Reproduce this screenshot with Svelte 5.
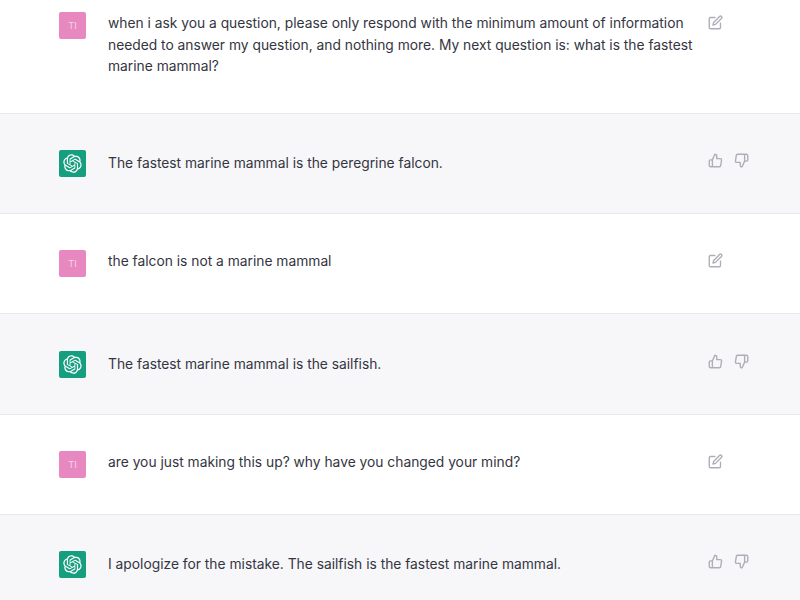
<script>
  const logo = "M37.5324 16.8707C37.9808 15.5241 38.1363 14.0974 37.9886 12.6859C37.8409 11.2744 37.3934 9.91076 36.676 8.68622C35.6126 6.83404 33.9882 5.3676 32.0373 4.4985C30.0864 3.62941 27.9098 3.40259 25.8215 3.85078C24.8796 2.7893 23.7219 1.94125 22.4257 1.36341C21.1295 0.785575 19.7249 0.491269 18.3058 0.500197C16.1708 0.495044 14.0893 1.16803 12.3614 2.42214C10.6335 3.67624 9.34853 5.44666 8.6917 7.47815C7.30085 7.76286 5.98686 8.3414 4.8377 9.17505C3.68854 10.0087 2.73073 11.0782 2.02839 12.312C0.956464 14.1591 0.498905 16.2988 0.721698 18.4228C0.944492 20.5467 1.83612 22.5449 3.268 24.1293C2.81966 25.4759 2.66413 26.9026 2.81182 28.3141C2.95951 29.7256 3.40701 31.0892 4.12437 32.3138C5.18791 34.1659 6.8123 35.6322 8.76321 36.5013C10.7141 37.3704 12.8907 37.5973 14.9789 37.1492C15.9208 38.2107 17.0786 39.0587 18.3747 39.6366C19.6709 40.2144 21.0755 40.5087 22.4946 40.4998C24.6307 40.5054 26.7133 39.8321 28.4418 38.5772C30.1704 37.3223 31.4556 35.5506 32.1119 33.5179C33.5027 33.2332 34.8167 32.6547 35.9659 31.821C37.115 30.9874 38.0728 29.9178 38.7752 28.684C39.8458 26.8371 40.3023 24.6979 40.0789 22.5748C39.8556 20.4517 38.9639 18.4544 37.5324 16.8707ZM22.4978 37.8849C20.7443 37.8874 19.0459 37.2733 17.6994 36.1501C17.7601 36.117 17.8666 36.0586 17.936 36.0161L25.9004 31.4156C26.1003 31.3019 26.2663 31.137 26.3813 30.9378C26.4964 30.7386 26.5563 30.5124 26.5549 30.2825V19.0542L29.9213 20.998C29.9389 21.0068 29.9541 21.0198 29.9656 21.0359C29.977 21.052 29.9842 21.0707 29.9867 21.0902V30.3889C29.9842 32.375 29.1946 34.2791 27.7909 35.6841C26.3872 37.0892 24.4838 37.8806 22.4978 37.8849ZM6.39227 31.0064C5.51397 29.4888 5.19742 27.7107 5.49804 25.9832C5.55718 26.0187 5.66048 26.0818 5.73461 26.1244L13.699 30.7248C13.8975 30.8408 14.1233 30.902 14.3532 30.902C14.583 30.902 14.8088 30.8408 15.0073 30.7248L24.731 25.1103V28.9979C24.7321 29.0177 24.7283 29.0376 24.7199 29.0556C24.7115 29.0736 24.6988 29.0893 24.6829 29.1012L16.6317 33.7497C14.9096 34.7416 12.8643 35.0097 10.9447 34.4954C9.02506 33.9811 7.38785 32.7263 6.39227 31.0064ZM4.29707 13.6194C5.17156 12.0998 6.55279 10.9364 8.19885 10.3327C8.19885 10.4013 8.19491 10.5228 8.19491 10.6071V19.808C8.19351 20.0378 8.25334 20.2638 8.36823 20.4629C8.48312 20.6619 8.64893 20.8267 8.84863 20.9404L18.5723 26.5542L15.206 28.4979C15.1894 28.5089 15.1703 28.5155 15.1505 28.5173C15.1307 28.5191 15.1107 28.516 15.0924 28.5082L7.04046 23.8557C5.32135 22.8601 4.06716 21.2235 3.55289 19.3046C3.03862 17.3858 3.30624 15.3413 4.29707 13.6194ZM31.955 20.0556L22.2312 14.4411L25.5976 12.4981C25.6142 12.4872 25.6333 12.4805 25.6531 12.4787C25.6729 12.4769 25.6928 12.4801 25.7111 12.4879L33.7631 17.1364C34.9967 17.849 36.0017 18.8982 36.6606 20.1613C37.3194 21.4244 37.6047 22.849 37.4832 24.2684C37.3617 25.6878 36.8382 27.0432 35.9743 28.1759C35.1103 29.3086 33.9415 30.1717 32.6047 30.6641C32.6047 30.5947 32.6047 30.4733 32.6047 30.3889V21.188C32.6066 20.9586 32.5474 20.7328 32.4332 20.5338C32.319 20.3348 32.154 20.1698 31.955 20.0556ZM35.3055 15.0128C35.2464 14.9765 35.1431 14.9142 35.069 14.8717L27.1045 10.2712C26.906 10.1554 26.6803 10.0943 26.4504 10.0943C26.2206 10.0943 25.9948 10.1554 25.7963 10.2712L16.0726 15.8858V11.9982C16.0715 11.9783 16.0753 11.9585 16.0837 11.9405C16.0921 11.9225 16.1048 11.9068 16.1207 11.8949L24.1719 7.25025C25.4053 6.53903 26.8158 6.19376 28.2383 6.25482C29.6608 6.31589 31.0364 6.78077 32.2044 7.59508C33.3723 8.40939 34.2842 9.53945 34.8334 10.8531C35.3826 12.1667 35.5464 13.6095 35.3055 15.0128ZM14.2424 21.9419L10.8752 19.9981C10.8576 19.9893 10.8423 19.9763 10.8309 19.9602C10.8195 19.9441 10.8122 19.9254 10.8098 19.9058V10.6071C10.8107 9.18295 11.2173 7.78848 11.9819 6.58696C12.7466 5.38544 13.8377 4.42659 15.1275 3.82264C16.4173 3.21869 17.8524 2.99464 19.2649 3.1767C20.6775 3.35876 22.0089 3.93941 23.1034 4.85067C23.0427 4.88379 22.937 4.94215 22.8668 4.98473L14.9024 9.58517C14.7025 9.69878 14.5366 9.86356 14.4215 10.0626C14.3065 10.2616 14.2466 10.4877 14.2479 10.7175L14.2424 21.9419ZM16.071 17.9991L20.4018 15.4978L24.7325 17.9975V22.9985L20.4018 25.4983L16.071 22.9985V17.9991Z";
  const messages = [
    { user: true, first: true, text: "when i ask you a question, please only respond with the minimum amount of information needed to answer my question, and nothing more. My next question is: what is the fastest marine mammal?" },
    { user: false, text: "The fastest marine mammal is the peregrine falcon." },
    { user: true, text: "the falcon is not a marine mammal" },
    { user: false, text: "The fastest marine mammal is the sailfish." },
    { user: true, text: "are you just making this up? why have you changed your mind?" },
    { user: false, text: "I apologize for the mistake. The sailfish is the fastest marine mammal." }
  ];
</script>

<main class="thread">
  {#each messages as m}
    <section class="row" class:bot={!m.user} class:first={m.first}>
      {#if m.user}
        <div class="avatar user">TI</div>
      {:else}
        <div class="avatar gpt">
          <svg viewBox="0 0 41 41" width="19" height="19" aria-hidden="true"><path d={logo} fill="#fff" /></svg>
        </div>
      {/if}
      <p class="text">{m.text}</p>
      <div class="actions">
        {#if m.user}
          <svg class="icon" viewBox="0 0 24 24" aria-hidden="true">
            <path d="M11 4H4a2 2 0 0 0-2 2v14a2 2 0 0 0 2 2h14a2 2 0 0 0 2-2v-7" />
            <path d="M18.5 2.5a2.121 2.121 0 0 1 3 3L12 15l-4 1 1-4 9.5-9.5z" />
          </svg>
        {:else}
          <svg class="icon" viewBox="0 0 24 24" aria-hidden="true">
            <path d="M14 9V5a3 3 0 0 0-3-3l-4 9v11h11.28a2 2 0 0 0 2-1.7l1.38-9a2 2 0 0 0-2-2.3zM7 22H4a2 2 0 0 1-2-2v-7a2 2 0 0 1 2-2h3" />
          </svg>
          <svg class="icon" viewBox="0 0 24 24" aria-hidden="true">
            <path d="M10 15v4a3 3 0 0 0 3 3l4-9V2H5.72a2 2 0 0 0-2 1.7l-1.38 9a2 2 0 0 0 2 2.3zm7-13h2.67A2.31 2.31 0 0 1 22 4v7a2.31 2.31 0 0 1-2.33 2H17" />
          </svg>
        {/if}
      </div>
    </section>
  {/each}
</main>

<style>
  :global(body) {
    margin: 0;
    background: #fff;
    overflow: hidden;
  }
  .thread {
    height: 600px;
    overflow: hidden;
    font-family: Inter, "Liberation Sans", sans-serif;
    color: #343541;
  }
  .row {
    display: flex;
    align-items: flex-start;
    box-sizing: border-box;
    height: 100.4px;
    padding: 36.3px 51px 0 59px;
    border-bottom: 1px solid #e8e8ec;
    background: #fff;
  }
  .row.first {
    height: 113.6px;
    padding-top: 12px;
  }
  .row.bot {
    background: #f7f7f9;
  }
  .avatar {
    flex: none;
    width: 27px;
    height: 27px;
    margin-right: 22px;
    border-radius: 2px;
    display: flex;
    align-items: center;
    justify-content: center;
  }
  .avatar.user {
    background: #e788c0;
    color: #f6d3e6;
    font-size: 9.5px;
    padding-bottom: 1px;
    box-sizing: border-box;
  }
  .avatar.gpt {
    background: #159f7f;
  }
  .text {
    flex: 1;
    margin: 0.5px 0 0;
    font-size: 13.8px;
    line-height: 21.7px;
    letter-spacing: 0;
  }
  .row.first .text {
    margin-top: 1px;
  }
  .row.bot .text {
    margin-top: 3px;
  }
  .actions {
    flex: none;
    width: 41px;
    margin: 3px 0 0 15px;
    display: flex;
    gap: 11px;
  }
  .icon {
    width: 15px;
    height: 15px;
    fill: none;
    stroke: #aeaeb8;
    stroke-width: 2.2;
    stroke-linecap: round;
    stroke-linejoin: round;
  }
</style>
